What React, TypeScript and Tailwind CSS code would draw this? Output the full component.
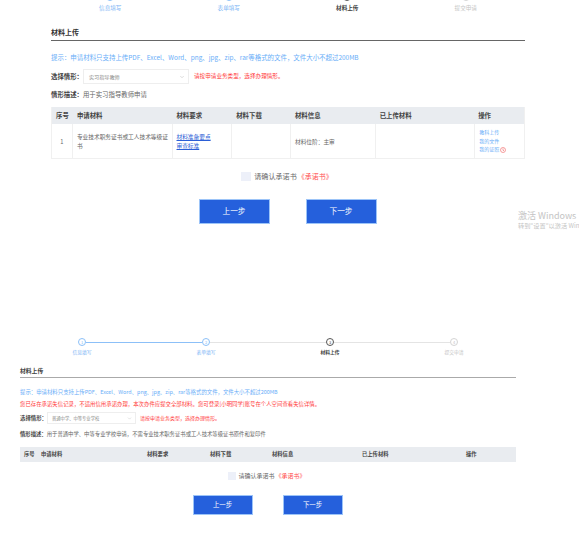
import { ChevronDown } from 'lucide-react';

const topColumns = ['w-[21px]', 'w-[100px]', 'w-[60px]', 'w-[59px]', 'w-[85px]', 'w-[100px]', 'w-[49px]'];

function TopStep({ label, labelClass, ringClass, left, right }: { label: string; labelClass: string; ringClass: string; left: string; right: string }) {
  return (
    <div className="flex flex-col items-center">
      <div className="flex h-[8px] w-full items-center">
        <span className={`h-px flex-1 ${left}`} />
        <span className={`h-[8px] w-[8px] rounded-full border bg-white ${ringClass}`} />
        <span className={`h-px flex-1 ${right}`} />
      </div>
      <p className={`mt-[3px] text-[5.6px] leading-[8px] ${labelClass}`}>{label}</p>
    </div>
  );
}

function BottomStep({ n, label, labelClass, ringClass, left, right }: { n: number; label: string; labelClass: string; ringClass: string; left: string; right: string }) {
  return (
    <div className="flex flex-col items-center">
      <div className="flex h-[8px] w-full items-center">
        <span className={`h-[1px] flex-1 ${left}`} />
        <span className={`flex h-[8px] w-[8px] items-center justify-center rounded-full border bg-white text-[4px] leading-none ${ringClass}`}>{n}</span>
        <span className={`h-[1px] flex-1 ${right}`} />
      </div>
      <p className={`mt-[2px] text-[4.8px] leading-[7px] ${labelClass}`}>{label}</p>
    </div>
  );
}

function TopPanel() {
  return (
    <section className="ml-[51px] h-[330px] w-[474px]">
      <div className="-mt-[7px] grid grid-cols-4">
        <TopStep label="信息填写" labelClass="text-[#7db5f5]" ringClass="border-[#8cc0f8]" left="bg-transparent" right="bg-[#8cc0f8]" />
        <TopStep label="表单填写" labelClass="text-[#7db5f5]" ringClass="border-[#8cc0f8]" left="bg-[#8cc0f8]" right="bg-[#e4e4e4]" />
        <TopStep label="材料上传" labelClass="font-bold text-[#444]" ringClass="border-[#555]" left="bg-[#e4e4e4]" right="bg-[#e4e4e4]" />
        <TopStep label="提交申请" labelClass="text-[#c4c4c4]" ringClass="border-[#d4d4d4]" left="bg-[#e4e4e4]" right="bg-transparent" />
      </div>

      <h2 className="mt-[14px] border-b border-[#666] pb-[2px] text-[7px] font-bold leading-[12px] text-[#333]">材料上传</h2>
      <p className="mt-[12px] text-[6.45px] leading-[10px] text-[#69aef8]">
        提示：申请材料只支持上传PDF、Excel、Word、png、jpg、zip、rar等格式的文件，文件大小不超过200MB
      </p>

      <div className="mt-[6px] flex h-[15px] items-center">
        <span className="w-[32px] text-[6.4px] font-bold text-[#444]">选择情形：</span>
        <div className="flex h-[15px] w-[106px] items-center justify-between border border-[#eeeeee] pl-[5px] pr-[3px] text-[5.1px] text-[#888]">
          实习指导教师
          <ChevronDown className="h-[6px] w-[6px] text-[#bbb]" />
        </div>
        <span className="ml-[5px] text-[5.6px] text-[#ff3b3b]">请按申请业务类型，选择办理情形。</span>
      </div>

      <p className="mt-[6px] text-[6.4px] leading-[10px] text-[#666]">
        <span className="font-bold text-[#444]">情形描述：</span>用于实习指导教师申请
      </p>

      <div className="mt-[7px] border border-t-0 border-[#f0f0f0] text-[#666]">
        <div className="flex h-[17px] items-center bg-[#e9ecf0] text-[6.4px] font-bold text-[#444]">
          <span className={`${topColumns[0]} text-center`}>序号</span>
          <span className={`${topColumns[1]} pl-[4px]`}>申请材料</span>
          <span className={`${topColumns[2]} pl-[4px]`}>材料要求</span>
          <span className={`${topColumns[3]} pl-[4px]`}>材料下载</span>
          <span className={`${topColumns[4]} pl-[4px]`}>材料信息</span>
          <span className={`${topColumns[5]} pl-[4px]`}>已上传材料</span>
          <span className={`${topColumns[6]} pl-[3px]`}>操作</span>
        </div>
        <div className="flex h-[34px] items-stretch text-[5.7px] leading-[9px]">
          <span className={`${topColumns[0]} flex items-center justify-center border-r border-[#f0f0f0]`}>1</span>
          <span className={`${topColumns[1]} flex items-center border-r border-[#f0f0f0] pl-[4px] pr-[2px]`}>专业技术职务证书或工人技术等级证书</span>
          <span className={`${topColumns[2]} flex flex-col justify-center border-r border-[#f0f0f0] pl-[4px] text-[#2b5ed6] underline`}>
            <span>材料准备要点</span>
            <span>审查标准</span>
          </span>
          <span className={`${topColumns[3]} border-r border-[#f0f0f0]`} />
          <span className={`${topColumns[4]} flex items-center border-r border-[#f0f0f0] pl-[4px]`}>材料位阶：主审</span>
          <span className={`${topColumns[5]} border-r border-[#f0f0f0]`} />
          <span className={`${topColumns[6]} flex flex-col justify-center pl-[4px] text-[5px] leading-[8.5px] text-[#69aef8]`}>
            <span>教科上传</span>
            <span>我的文件</span>
            <span className="flex items-center gap-[1px]">
              我的证照
              <svg viewBox="0 0 12 12" className="h-[6px] w-[6px] text-[#f06060]" fill="none" stroke="currentColor" strokeWidth="1.2">
                <circle cx="6" cy="6" r="5" />
                <path d="M6 3v3.5l2 1" />
              </svg>
            </span>
          </span>
        </div>
      </div>

      <div className="mt-[12px] flex items-center justify-center pr-[2px]">
        <span className="h-[9px] w-[10px] bg-[#edf0f9]" />
        <span className="ml-[3px] text-[7.1px] text-[#666]">请确认承诺书</span>
        <span className="ml-[1px] text-[7px] text-[#ff4b4b]">《承诺书》</span>
      </div>

      <div className="mt-[17px] flex justify-center gap-[36px] pr-[1px]">
        <button className="h-[25px] w-[71px] border border-[#9cc4f8] bg-[#2560dc] text-[7.7px] text-white">上一步</button>
        <button className="h-[25px] w-[71px] border border-[#9cc4f8] bg-[#2560dc] text-[7.7px] text-white">下一步</button>
      </div>
    </section>
  );
}

function BottomPanel() {
  return (
    <section className="ml-[20px] w-[496px]">
      <div className="mt-[15px] grid grid-cols-4">
        <BottomStep n={1} label="信息填写" labelClass="text-[#7db5f5]" ringClass="border-[#8cc0f8] text-[#7db5f5]" left="bg-transparent" right="bg-[#8cc0f8]" />
        <BottomStep n={2} label="表单填写" labelClass="text-[#7db5f5]" ringClass="border-[#8cc0f8] text-[#7db5f5]" left="bg-[#8cc0f8]" right="bg-[#e4e4e4]" />
        <BottomStep n={3} label="材料上传" labelClass="font-bold text-[#444]" ringClass="border-[#555] text-[#444]" left="bg-[#e4e4e4]" right="bg-[#e4e4e4]" />
        <BottomStep n={4} label="提交申请" labelClass="text-[#c4c4c4]" ringClass="border-[#d4d4d4] text-[#c4c4c4]" left="bg-[#e4e4e4]" right="bg-transparent" />
      </div>

      <h2 className="mt-[12px] border-b border-[#aaa] pb-[2px] text-[5.8px] font-bold leading-[8px] text-[#444]">材料上传</h2>
      <p className="mt-[10px] text-[5.4px] leading-[8px] text-[#69aef8]">
        提示：申请材料只支持上传PDF、Excel、Word、png、jpg、zip、rar等格式的文件，文件大小不超过200MB
      </p>
      <p className="mt-[4px] text-[5.4px] leading-[8px] text-[#ff3b3b]">
        您已存在承诺失信记录，不适用信用承诺办理，本次办件应提交全部材料。您可登录[小明同学]账号在个人空间查看失信详情。
      </p>

      <div className="mt-[4px] flex h-[12px] items-center">
        <span className="w-[27px] text-[5.4px] font-bold text-[#444]">选择情形：</span>
        <div className="flex h-[12px] w-[89px] items-center justify-between border border-[#eeeeee] pl-[4px] pr-[3px] text-[4.3px] text-[#888]">
          普通中学、中等专业学校
          <ChevronDown className="h-[5px] w-[5px] text-[#bbb]" />
        </div>
        <span className="ml-[4px] text-[5px] text-[#ff3b3b]">请按申请业务类型，选择办理情形。</span>
      </div>

      <p className="mt-[6px] text-[5.35px] leading-[8px] text-[#666]">
        <span className="font-bold text-[#444]">情形描述：</span>用于普通中学、中等专业学校申请，不需专业技术职务证书或工人技术等级证书原件和复印件
      </p>

      <div className="mt-[9px] grid h-[15px] grid-cols-[21px_106px_63px_62px_90px_104px_50px] items-center bg-[#e9ecf0] text-[5.3px] font-bold text-[#444]">
        <span className="pl-[4px]">序号</span>
        <span>申请材料</span>
        <span>材料要求</span>
        <span>材料下载</span>
        <span>材料信息</span>
        <span>已上传材料</span>
        <span>操作</span>
      </div>

      <div className="mt-[9px] flex items-center justify-center pr-[2px]">
        <span className="h-[8px] w-[8px] bg-[#edf0f9]" />
        <span className="ml-[2px] text-[6px] text-[#666]">请确认承诺书</span>
        <span className="ml-[1px] text-[6px] text-[#ff4b4b]">《承诺书》</span>
      </div>

      <div className="mt-[15px] flex justify-center gap-[30px] pr-[1px]">
        <button className="h-[20px] w-[60px] border border-[#9cc4f8] bg-[#2560dc] text-[6.4px] text-white">上一步</button>
        <button className="h-[20px] w-[60px] border border-[#9cc4f8] bg-[#2560dc] text-[6.4px] text-white">下一步</button>
      </div>
    </section>
  );
}

export default function App() {
  return (
    <div className="relative h-[540px] w-[579px] overflow-hidden bg-white font-['Noto_Sans_CJK_SC','Noto_Sans',sans-serif]">
      <TopPanel />
      <BottomPanel />
      <div className="absolute left-[518px] top-[209px] whitespace-nowrap text-[#c4c4c4]">
        <p className="text-[9px] leading-[13px]">激活 Windows</p>
        <p className="text-[6.2px] leading-[8px]">转到"设置"以激活 Windows。</p>
      </div>
    </div>
  );
}
